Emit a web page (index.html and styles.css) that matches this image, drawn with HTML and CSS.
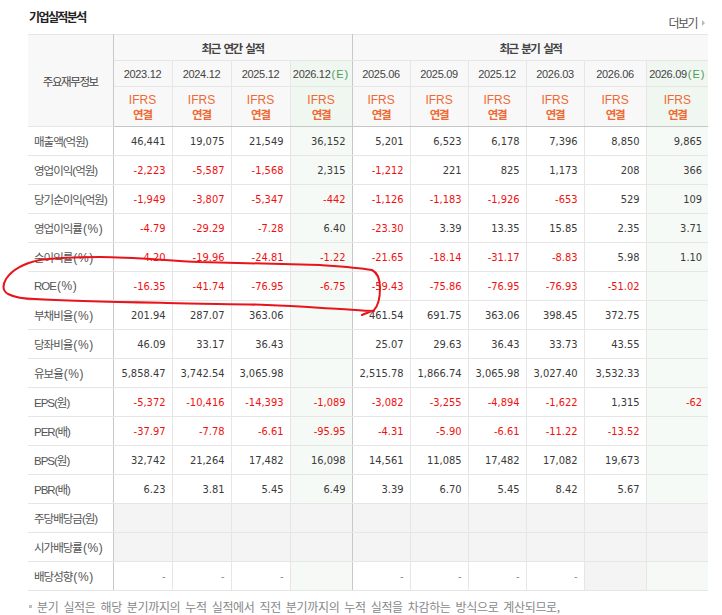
FILE: index.html
```html
<!DOCTYPE html>
<html lang="ko">
<head>
<meta charset="utf-8">
<title>기업실적분석</title>
<link rel="stylesheet" href="styles.css">
</head>
<body>
<div class="wrap">
  <div class="title-bar">
    <h3 class="title">기업실적분석</h3>
    <a class="more">더보기<span class="arrow"></span></a>
  </div>
  <table class="perf">
    <colgroup>
      <col class="c-label"><col class="c59"><col class="c59"><col class="c59"><col class="c62">
      <col class="c58"><col class="c58"><col class="c58"><col class="c58"><col class="c62"><col class="c62">
    </colgroup>
    <thead>
      <tr class="h1">
        <th rowspan="3" class="lab-h">주요재무정보</th>
        <th colspan="4" class="grp gsep">최근 연간 실적</th>
        <th colspan="6" class="grp">최근 분기 실적</th>
      </tr>
      <tr class="h2">
        <th>2023.12</th><th>2024.12</th><th>2025.12</th><th class="e gsep">2026.12<em>(E)</em></th>
        <th>2025.06</th><th>2025.09</th><th>2025.12</th><th>2026.03</th><th>2026.06</th><th class="e">2026.09<em>(E)</em></th>
      </tr>
      <tr class="h3">
        <th class="ifrs">IFRS<br><b>연결</b></th><th class="ifrs">IFRS<br><b>연결</b></th><th class="ifrs">IFRS<br><b>연결</b></th><th class="ifrs e gsep">IFRS<br><b>연결</b></th>
        <th class="ifrs">IFRS<br><b>연결</b></th><th class="ifrs">IFRS<br><b>연결</b></th><th class="ifrs">IFRS<br><b>연결</b></th><th class="ifrs">IFRS<br><b>연결</b></th><th class="ifrs">IFRS<br><b>연결</b></th><th class="ifrs e">IFRS<br><b>연결</b></th>
      </tr>
    </thead>
    <tbody>
      <tr>
        <th>매출액(억원)</th>
        <td>46,441</td><td>19,075</td><td>21,549</td><td class="e gsep">36,152</td>
        <td>5,201</td><td>6,523</td><td>6,178</td><td>7,396</td><td>8,850</td><td class="e">9,865</td>
      </tr>
      <tr>
        <th>영업이익(억원)</th>
        <td class="neg">-2,223</td><td class="neg">-5,587</td><td class="neg">-1,568</td><td class="e gsep">2,315</td>
        <td class="neg">-1,212</td><td>221</td><td>825</td><td>1,173</td><td>208</td><td class="e">366</td>
      </tr>
      <tr>
        <th>당기순이익(억원)</th>
        <td class="neg">-1,949</td><td class="neg">-3,807</td><td class="neg">-5,347</td><td class="e gsep neg">-442</td>
        <td class="neg">-1,126</td><td class="neg">-1,183</td><td class="neg">-1,926</td><td class="neg">-653</td><td>529</td><td class="e">109</td>
      </tr>
      <tr class="sep">
        <th>영업이익률<span class="pct">(%)</span></th>
        <td class="neg">-4.79</td><td class="neg">-29.29</td><td class="neg">-7.28</td><td class="e gsep">6.40</td>
        <td class="neg">-23.30</td><td>3.39</td><td>13.35</td><td>15.85</td><td>2.35</td><td class="e">3.71</td>
      </tr>
      <tr>
        <th>순이익률<span class="pct">(%)</span></th>
        <td class="neg">-4.20</td><td class="neg">-19.96</td><td class="neg">-24.81</td><td class="e gsep neg">-1.22</td>
        <td class="neg">-21.65</td><td class="neg">-18.14</td><td class="neg">-31.17</td><td class="neg">-8.83</td><td>5.98</td><td class="e">1.10</td>
      </tr>
      <tr>
        <th>ROE<span class="pct">(%)</span></th>
        <td class="neg">-16.35</td><td class="neg">-41.74</td><td class="neg">-76.95</td><td class="e gsep neg">-6.75</td>
        <td class="neg">-59.43</td><td class="neg">-75.86</td><td class="neg">-76.95</td><td class="neg">-76.93</td><td class="neg">-51.02</td><td class="e"></td>
      </tr>
      <tr class="sep">
        <th>부채비율<span class="pct">(%)</span></th>
        <td>201.94</td><td>287.07</td><td>363.06</td><td class="e gsep"></td>
        <td>461.54</td><td>691.75</td><td>363.06</td><td>398.45</td><td>372.75</td><td class="e"></td>
      </tr>
      <tr>
        <th>당좌비율<span class="pct">(%)</span></th>
        <td>46.09</td><td>33.17</td><td>36.43</td><td class="e gsep"></td>
        <td>25.07</td><td>29.63</td><td>36.43</td><td>33.73</td><td>43.55</td><td class="e"></td>
      </tr>
      <tr>
        <th>유보율<span class="pct">(%)</span></th>
        <td>5,858.47</td><td>3,742.54</td><td>3,065.98</td><td class="e gsep"></td>
        <td>2,515.78</td><td>1,866.74</td><td>3,065.98</td><td>3,027.40</td><td>3,532.33</td><td class="e"></td>
      </tr>
      <tr class="sep">
        <th>EPS(원)</th>
        <td class="neg">-5,372</td><td class="neg">-10,416</td><td class="neg">-14,393</td><td class="e gsep neg">-1,089</td>
        <td class="neg">-3,082</td><td class="neg">-3,255</td><td class="neg">-4,894</td><td class="neg">-1,622</td><td>1,315</td><td class="e neg">-62</td>
      </tr>
      <tr>
        <th>PER(배)</th>
        <td class="neg">-37.97</td><td class="neg">-7.78</td><td class="neg">-6.61</td><td class="e gsep neg">-95.95</td>
        <td class="neg">-4.31</td><td class="neg">-5.90</td><td class="neg">-6.61</td><td class="neg">-11.22</td><td class="neg">-13.52</td><td class="e"></td>
      </tr>
      <tr>
        <th>BPS(원)</th>
        <td>32,742</td><td>21,264</td><td>17,482</td><td class="e gsep">16,098</td>
        <td>14,561</td><td>11,085</td><td>17,482</td><td>17,082</td><td>19,673</td><td class="e"></td>
      </tr>
      <tr>
        <th>PBR(배)</th>
        <td>6.23</td><td>3.81</td><td>5.45</td><td class="e gsep">6.49</td>
        <td>3.39</td><td>6.70</td><td>5.45</td><td>8.42</td><td>5.67</td><td class="e"></td>
      </tr>
      <tr class="sep dim">
        <th>주당배당금(원)</th>
        <td></td><td></td><td></td><td class="gsep"></td>
        <td></td><td></td><td></td><td></td><td></td><td></td>
      </tr>
      <tr class="dim">
        <th>시가배당률<span class="pct">(%)</span></th>
        <td></td><td></td><td></td><td class="gsep"></td>
        <td></td><td></td><td></td><td></td><td></td><td></td>
      </tr>
      <tr>
        <th>배당성향<span class="pct">(%)</span></th>
        <td class="dash">-</td><td class="dash">-</td><td class="dash">-</td><td class="e gsep"></td>
        <td class="dash">-</td><td class="dash">-</td><td class="dash">-</td><td class="dash">-</td><td class="grey"></td><td class="e"></td>
      </tr>
    </tbody>
  </table>
  <p class="note"><span class="dot"></span>분기 실적은 해당 분기까지의 누적 실적에서 직전 분기까지의 누적 실적을 차감하는 방식으로 계산되므로,</p>
</div>
<svg class="scribble" width="722" height="615" viewBox="0 0 722 615" aria-hidden="true">
  <path d="M362,315 C366,313 371,312 374,310 C378,306 380,298 380,288 C380,279 378,273 372,270 C355,267 335,266 320,265 C280,264 240,263 200,262 C160,260 130,257 100,257 C75,257 55,258 40,260 C25,263 12,270 6,279 C2,286 3,291 8,294 C14,297 24,299 35,299 C70,301 120,302 167,303 C210,304 245,304 267,305 C300,306 320,308 340,309 C355,310 365,311 374,311"
        fill="none" stroke="#e8141c" stroke-width="2" stroke-linecap="round" stroke-linejoin="round"/>
</svg>
</body>
</html>
```

FILE: styles.css
```css
html, body {
  margin: 0;
  padding: 0;
  background: #ffffff;
}

body {
  font-family: "Noto Sans CJK KR", "Noto Sans", sans-serif;
  color: #333;
  position: relative;
  width: 722px;
  height: 615px;
  overflow: hidden;
}

.wrap {
  padding: 0 14px 0 28px;
}

.title-bar {
  height: 34px;
  display: flex;
  justify-content: space-between;
  align-items: flex-start;
}

.title {
  margin: 10px 0 0 1px;
  font-size: 12px;
  line-height: 14px;
  font-weight: bold;
  color: #222;
  letter-spacing: -1.6px;
}

.more {
  margin-top: 16px;
  padding-right: 3px;
  display: flex;
  align-items: center;
  font-size: 12px;
  line-height: 14px;
  color: #555;
  letter-spacing: -1.5px;
  text-decoration: none;
}

.arrow {
  display: inline-block;
  margin-left: 5px;
  width: 0;
  height: 0;
  border-top: 3px solid transparent;
  border-bottom: 3px solid transparent;
  border-left: 3px solid #b8b8b8;
}

.perf {
  width: 680px;
  table-layout: fixed;
  border-collapse: collapse;
  border-top: 1px solid #c2c2c2;
  border-bottom: 1px solid #c6c6c6;
}

.c-label { width: 85px; }
.c59 { width: 59px; }
.c58 { width: 58px; }
.c62 { width: 62px; }

.perf th,
.perf td {
  padding: 0;
  border: 1px solid #e6e6e6;
}

.perf tr > :first-child { border-left: none; }
.perf tr > :last-child { border-right: none; }

.perf thead th {
  background: #f8f8f8;
  font-weight: normal;
  color: #444;
  text-align: center;
}

.perf thead .lab-h {
  font-size: 11.5px;
  letter-spacing: -1.4px;
  color: #444;
  border-right: 1px solid #c8c8c8;
}

.perf .h1 { height: 26px; }
.perf .h2 { height: 26px; }
.perf .h3 { height: 40px; }

.perf .grp {
  font-size: 11.5px;
  font-weight: bold;
  color: #444;
  letter-spacing: -1.5px;
  word-spacing: 2px;
}

.perf .h2 th {
  font-family: "Liberation Sans", "Noto Sans", sans-serif;
  font-size: 11px;
  letter-spacing: -0.3px;
  color: #444;
}

.perf .h2 th em {
  font-style: normal;
  color: #4d9a5f;
  letter-spacing: 1px;
  margin-left: 1px;
}

.perf .ifrs {
  font-family: "Liberation Sans", "Noto Sans", sans-serif;
  font-size: 12px;
  line-height: 14px;
  color: #ee6a34;
  padding-top: 1px;
}

.perf .ifrs b {
  font-family: "Noto Sans CJK KR", sans-serif;
  font-weight: bold;
  font-size: 11.5px;
  letter-spacing: -1.2px;
}

.perf thead tr:last-child th { border-bottom: 1px solid #c6c6c6; }

.perf .gsep { border-right: 1px solid #c8c8c8; }

.perf thead th.e { background: #f0f6f0; }

.perf tbody tr { height: 29px; }

.perf tbody th {
  text-align: left;
  padding-left: 6px;
  font-family: "Liberation Sans", "Noto Sans CJK KR", sans-serif;
  font-weight: normal;
  font-size: 11.5px;
  letter-spacing: -1px;
  color: #555;
  background: #fff;
  border-right: 1px solid #c8c8c8;
  white-space: nowrap;
}

.perf tbody th .pct {
  font-size: 12px;
  letter-spacing: 0.6px;
  margin-left: 1px;
}

.perf tbody td {
  text-align: right;
  padding-right: 6px;
  font-family: "DejaVu Sans", "Liberation Sans", sans-serif;
  font-stretch: condensed;
  font-size: 11px;
  color: #3a3a3a;
  background: #fff;
}

.perf tbody td.e { background: #f6faf6; }
.perf tbody td.neg { color: #f01010; }
.perf tbody td.dash { color: #888; }
.perf tbody td.grey { background: #f4f4f4; }

.perf tbody tr.sep > th,
.perf tbody tr.sep > td { border-top: 1px solid #c6c6c6; }

.perf tbody tr.dim td { background: #f4f4f4; }

.note {
  margin: 9px 0 0 0;
  font-size: 12px;
  line-height: 14px;
  color: #888;
  letter-spacing: -0.35px;
  word-spacing: 2px;
  white-space: nowrap;
  display: flex;
  align-items: center;
}

.dot {
  display: inline-block;
  width: 3px;
  height: 3px;
  background: #c0c0c0;
  margin: 0 5px 2px 1px;
}

.scribble {
  position: absolute;
  left: 0;
  top: 0;
  pointer-events: none;
}
```
